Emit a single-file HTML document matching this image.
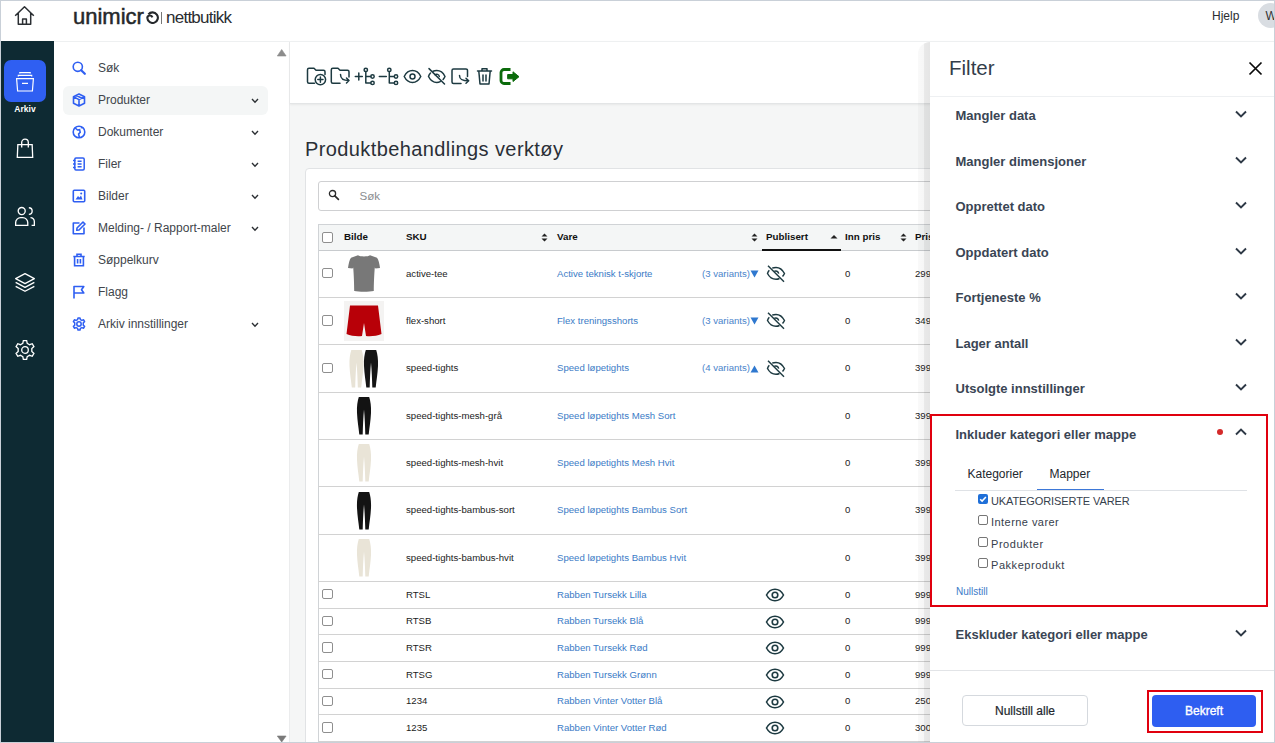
<!DOCTYPE html>
<html><head><meta charset="utf-8">
<style>
*{box-sizing:border-box;margin:0;padding:0}
html,body{width:1275px;height:743px;overflow:hidden;background:#fff;font-family:"Liberation Sans",sans-serif;color:#222}
svg{display:block}
.a{position:absolute}
#frame{position:absolute;left:0;top:0;width:1275px;height:743px;border:1px solid #c9d0d8;pointer-events:none;z-index:100}
#top{position:absolute;left:0;top:0;width:1275px;height:42px;background:#fff;border-bottom:1px solid #eef0f1}
#rail{position:absolute;left:0;top:41px;width:54px;height:702px;background:#0e2a33}
#nav{position:absolute;left:54px;top:41px;width:236px;height:702px;background:#fff}
#navscroll{position:absolute;left:289px;top:41px;width:1px;height:702px;background:#ebeced}
#main{position:absolute;left:290px;top:41px;width:985px;height:702px;background:#f5f6f6}
#toolbar{position:absolute;left:0;top:0;width:985px;height:63px;background:#fff;border-bottom:1px solid #e3e5e6;box-shadow:0 1px 2px rgba(0,0,0,0.06)}
.ni{position:absolute;left:63px;width:205px;height:29px;border-radius:6px;font-size:12px;color:#41454b}
.ni .t{position:absolute;left:35px;top:7px;line-height:14px}
.ni .ic{position:absolute;left:9px;top:7px}
.ni .ch{position:absolute;left:188px;top:12px}
#title{position:absolute;left:305px;top:138px;font-size:20px;letter-spacing:0.4px;color:#2a2f36}
#card{position:absolute;left:305px;top:168px;width:700px;height:600px;background:#fff;border:1px solid #e1e3e5;border-radius:4px}
#search{position:absolute;left:318px;top:181px;width:700px;height:30px;border:1px solid #cfd0d2;border-radius:3px;background:#fff}
#panel{position:absolute;left:930px;top:42px;width:345px;height:701px;background:#fff}
#pshadow{position:absolute;left:918px;top:42px;width:12px;height:701px;border-top-left-radius:12px;background:linear-gradient(to right,rgba(0,0,0,0.025) 0,rgba(0,0,0,0.035) 50%,rgba(0,0,0,0.085) 50%,rgba(0,0,0,0.10) 100%)}
.th{font-size:9.8px;font-weight:bold;color:#111;line-height:12px;white-space:nowrap}
.td{font-size:9.6px;color:#222;line-height:12px;white-space:nowrap}
.lk{color:#3b7bc6}
.lk2{color:#4a84cb}
.fh{font-size:13px;font-weight:bold;color:#3a4554;line-height:15px;white-space:nowrap}
</style></head><body>
<div id="top">
  <svg class="a" style="left:14px;top:5px" width="21" height="21" viewBox="0 0 21 21" fill="none" stroke="#2b2f33" stroke-width="1.5" stroke-linejoin="round"><path d="M1.2 10.8 L10.5 1.8 L19.8 10.8 M4.3 8.2 V19.3 H16.7 V8.2 M8.6 19.3 V14 H12.4 V19.3"/></svg>
  <div class="a" style="left:73px;top:4px;font-size:22px;line-height:25px;-webkit-text-stroke:0.5px #25282b;color:#25282b">unimicr</div><svg class="a" style="left:145.5px;top:11.3px" width="13" height="13" viewBox="0 0 13 13" fill="none" stroke="#25282b" stroke-width="2.1"><path d="M2.4 3.4 A5.3 5.3 0 1 1 1.3 7.2"/><path d="M1.3 7.2 A2.6 2.6 0 0 1 6.4 6.4"/></svg>
  <div class="a" style="left:161px;top:12px;width:1px;height:11.5px;background:#777"></div>
  <div class="a" style="left:166px;top:8px;font-size:17px;line-height:19px;letter-spacing:-0.75px;color:#2a2d31">nettbutikk</div>
  <div class="a" style="left:1212px;top:9px;font-size:12px;line-height:14px;color:#2a2d31">Hjelp</div>
  <div class="a" style="left:1258px;top:3px;width:25px;height:25px;border-radius:50%;background:#d9dde2"></div>
  <div class="a" style="left:1265.5px;top:9px;font-size:12px;line-height:14px;color:#333">W</div>
</div>
<div id="rail">
  <div class="a" style="left:4px;top:19px;width:42px;height:42px;border-radius:7px;background:#2f5ff2"></div>
  <svg class="a" style="left:15px;top:30px" width="20" height="22" viewBox="0 0 20 22" fill="none" stroke="#fff" stroke-width="1.2"><path d="M4.8 2.6 V1.6 H15.2 V2.6 M3.3 5.6 V4.4 H16.7 V5.6 M1.6 7.7 H18.4 L17.4 20 H2.6 Z M7 12.3 H13"/></svg>
  <div class="a" style="left:0;top:63px;width:50px;text-align:center;font-size:8.5px;font-weight:bold;color:#fff">Arkiv</div>
  <svg class="a" style="left:14px;top:96px" width="22" height="22" viewBox="0 0 20 20" fill="none" stroke="#fff" stroke-width="1.2"><path d="M3.5 7 H16.5 L17 18.5 H3 Z M7 9.5 V5 A3 3 0 0 1 13 5 V9.5"/></svg>
  <svg class="a" style="left:14px;top:164px" width="22" height="22" viewBox="0 0 20 20" fill="none" stroke="#fff" stroke-width="1.2"><circle cx="7" cy="5.5" r="3.2"/><path d="M1.5 18.5 V16 A4.5 4.5 0 0 1 6 11.5 H8 A4.5 4.5 0 0 1 12.5 16 V18.5 Z M13.5 2.5 A3 3 0 0 1 13.5 8.5 M15 11.5 A3.5 3.5 0 0 1 18.5 15 V18.5 H16"/></svg>
  <svg class="a" style="left:14px;top:230.5px" width="22" height="22" viewBox="0 0 20 20" fill="none" stroke="#fff" stroke-width="1.2" stroke-linejoin="round"><path d="M10 1.5 L18.5 6 L10 10.5 L1.5 6 Z M1.5 9.5 L10 14 L18.5 9.5 M1.5 13 L10 17.5 L18.5 13"/></svg>
  <svg class="a" style="left:14px;top:298px" width="22" height="22" viewBox="0 0 20 20" fill="none" stroke="#fff" stroke-width="1.2"><circle cx="10" cy="10" r="3"/><path d="M8.5 1.5 H11.5 L12 4 L14.2 5.2 L16.6 4.3 L18.1 6.9 L16.2 8.6 V11.4 L18.1 13.1 L16.6 15.7 L14.2 14.8 L12 16 L11.5 18.5 H8.5 L8 16 L5.8 14.8 L3.4 15.7 L1.9 13.1 L3.8 11.4 V8.6 L1.9 6.9 L3.4 4.3 L5.8 5.2 L8 4 Z"/></svg>
</div>
<div id="nav"></div>
<div id="navscroll"></div>
<svg class="a" style="left:277px;top:49px" width="10" height="8" viewBox="0 0 10 8"><path d="M0.3 7 L4.7 0.5 L9.1 7 Z" fill="#8c8c8c" stroke="#8c8c8c" stroke-width="0.6" stroke-linejoin="round"/></svg>
<svg class="a" style="left:277px;top:735px" width="10" height="8" viewBox="0 0 10 8"><path d="M0.3 1 L4.7 7 L9.1 1 Z" fill="#7a7a7a" stroke="#7a7a7a" stroke-width="0.6" stroke-linejoin="round"/></svg>
<div class="ni" style="top:54px"><svg class="ic" width="14" height="14" viewBox="0 0 14 14" fill="none" stroke="#2f5ff2" stroke-width="1.6"><circle cx="5.8" cy="5.8" r="4.6"/><path d="M9.2 9.2 L12.8 12.8" stroke-width="2.2" stroke-linecap="round"/></svg><span class="t">Søk</span></div>
<div class="ni" style="top:86px;background:#f4f6f6"><svg class="ic" width="14" height="14" viewBox="0 0 14 14" fill="none" stroke="#2f5ff2" stroke-width="1.6" stroke-linejoin="round"><path d="M7 1 L12.5 3.8 V10.2 L7 13 L1.5 10.2 V3.8 Z M1.5 3.8 L7 6.6 L12.5 3.8 M7 6.6 V13 M4.2 2.4 L9.8 5.2"/></svg><span class="t">Produkter</span><svg class="ch" width="8" height="6" viewBox="0 0 8 6" fill="none" stroke="#2b2f33" stroke-width="1.35"><path d="M1 1 L4 4.2 L7 1"/></svg></div>
<div class="ni" style="top:118px"><svg class="ic" width="14" height="14" viewBox="0 0 14 14" fill="none" stroke="#2f5ff2" stroke-width="1.6"><circle cx="7" cy="7" r="5.8"/><path d="M3.2 3 L5.5 5 L7.6 4.6 L8.2 7.2 L6.6 9 L7.4 12.6 M9.8 1.8 L9.5 3.4" /></svg><span class="t">Dokumenter</span><svg class="ch" width="8" height="6" viewBox="0 0 8 6" fill="none" stroke="#2b2f33" stroke-width="1.35"><path d="M1 1 L4 4.2 L7 1"/></svg></div>
<div class="ni" style="top:150px"><svg class="ic" width="14" height="14" viewBox="0 0 14 14" fill="none" stroke="#2f5ff2" stroke-width="1.5"><rect x="2.8" y="1" width="9.4" height="12" rx="1.2"/><path d="M1 3.5 H3.5 M1 7 H3.5 M1 10.5 H3.5 M5.6 4.3 H9.6 M5.6 7 H9.6 M5.6 9.7 H9.6"/></svg><span class="t">Filer</span><svg class="ch" width="8" height="6" viewBox="0 0 8 6" fill="none" stroke="#2b2f33" stroke-width="1.35"><path d="M1 1 L4 4.2 L7 1"/></svg></div>
<div class="ni" style="top:182px"><svg class="ic" width="14" height="14" viewBox="0 0 14 14"><rect x="1.3" y="1.3" width="11.4" height="11.4" rx="1" fill="none" stroke="#2f5ff2" stroke-width="1.6"/><path d="M3.5 10.5 L6 7 L7.5 8.5 L9 6.5 L10.5 10.5 Z" fill="#2f5ff2"/><circle cx="9.2" cy="4.4" r="1" fill="#2f5ff2"/></svg><span class="t">Bilder</span><svg class="ch" width="8" height="6" viewBox="0 0 8 6" fill="none" stroke="#2b2f33" stroke-width="1.35"><path d="M1 1 L4 4.2 L7 1"/></svg></div>
<div class="ni" style="top:214px"><svg class="ic" width="14" height="14" viewBox="0 0 14 14" fill="none" stroke="#2f5ff2" stroke-width="1.6" stroke-linejoin="round"><path d="M7.5 2 H1.3 V12.7 H12 V6.5"/><path d="M11 1 L13 3 L7 9 L4.8 9.3 L5 7 Z"/></svg><span class="t">Melding- / Rapport-maler</span><svg class="ch" width="8" height="6" viewBox="0 0 8 6" fill="none" stroke="#2b2f33" stroke-width="1.35"><path d="M1 1 L4 4.2 L7 1"/></svg></div>
<div class="ni" style="top:246px"><svg class="ic" width="14" height="14" viewBox="0 0 14 14" fill="none" stroke="#2f5ff2" stroke-width="1.6"><path d="M1.3 3.5 H12.7 M5 3.5 V1.3 H9 V3.5 M2.6 3.5 V12.7 H11.4 V3.5 M5.6 6 V10.5 M8.4 6 V10.5"/></svg><span class="t">Søppelkurv</span></div>
<div class="ni" style="top:278px"><svg class="ic" width="14" height="14" viewBox="0 0 14 14" fill="none" stroke="#2f5ff2" stroke-width="1.6" stroke-linejoin="round"><path d="M2 13.5 V1.5 H11.8 L9.5 4.8 L11.8 8 H2"/></svg><span class="t">Flagg</span></div>
<div class="ni" style="top:310px"><svg class="ic" width="14" height="14" viewBox="0 0 14 14" fill="none" stroke="#2f5ff2" stroke-width="1.5" stroke-linejoin="round"><circle cx="7" cy="7" r="2.2"/><path d="M6 0.9 H8 L8.4 2.6 L9.9 3.4 L11.6 2.8 L12.6 4.6 L11.3 5.8 V8.2 L12.6 9.4 L11.6 11.2 L9.9 10.6 L8.4 11.4 L8 13.1 H6 L5.6 11.4 L4.1 10.6 L2.4 11.2 L1.4 9.4 L2.7 8.2 V5.8 L1.4 4.6 L2.4 2.8 L4.1 3.4 L5.6 2.6 Z"/></svg><span class="t">Arkiv innstillinger</span><svg class="ch" width="8" height="6" viewBox="0 0 8 6" fill="none" stroke="#2b2f33" stroke-width="1.35"><path d="M1 1 L4 4.2 L7 1"/></svg></div>
<div id="main"><div id="toolbar"></div></div>
<div class="a" style="left:54px;top:41px;width:1221px;height:1px;background:#eef0f1"></div>
<svg class="a" style="left:300px;top:60px" width="230" height="32" viewBox="300 60 230 32" fill="none" stroke="#1d3a41" stroke-width="1.5" stroke-linecap="round" stroke-linejoin="round">
  <!-- folder plus -->
  <path d="M314.5 83.2 H309 A1.5 1.5 0 0 1 307.5 81.7 V69.8 A1.5 1.5 0 0 1 309 68.3 H314 L316 70.2 H323.5 A1.5 1.5 0 0 1 325 71.7 V74.5"/>
  <circle cx="320.4" cy="79.6" r="5.2"/><path d="M320.4 77 V82.2 M317.8 79.6 H323"/>
  <!-- folder arrow -->
  <path d="M340 83.2 H332.8 A1.5 1.5 0 0 1 331.3 81.7 V69.8 A1.5 1.5 0 0 1 332.8 68.3 H338 L340 70.2 H347.5 A1.5 1.5 0 0 1 349 71.7 V77"/>
  <path d="M340.5 74.5 C340.5 79 343 80.5 349 80.5 M346.5 78 L349 80.5 L346.5 83"/>
  <!-- plus tree -->
  <path d="M355.3 76.5 H362.3 M358.8 73 V80"/>
  <circle cx="365.8" cy="69.9" r="1.7"/><path d="M365.8 71.6 V82.9 H370.8 M365.8 76.5 H370.8"/><circle cx="372.5" cy="76.5" r="1.7"/><circle cx="372.5" cy="82.9" r="1.7"/>
  <!-- minus tree -->
  <path d="M379.3 76.5 H386.3"/>
  <circle cx="389.3" cy="69.9" r="1.7"/><path d="M389.3 71.6 V82.9 H394.3 M389.3 76.5 H394.3"/><circle cx="396" cy="76.5" r="1.7"/><circle cx="396" cy="82.9" r="1.7"/>
  <!-- eye -->
  <path d="M404.2 76.5 C406.5 72 409.5 70.6 412.5 70.6 C415.5 70.6 418.5 72 420.8 76.5 C418.5 81 415.5 82.4 412.5 82.4 C409.5 82.4 406.5 81 404.2 76.5 Z"/><circle cx="412.5" cy="76.5" r="2.5"/>
  <!-- eye slash -->
  <path d="M430.5 73 C429.5 74 428.9 75 428.5 76.5 C430.8 81 433.8 82.4 436.8 82.4 C438 82.4 439.2 82.1 440.3 81.6 M433 71.3 C434.2 70.8 435.5 70.6 436.8 70.6 C439.8 70.6 442.8 72 445 76.5 C444.4 77.7 443.8 78.6 443.1 79.4 M435 74.6 C436.5 73.6 439 74.3 439.3 76.5"/><path d="M429 68.6 L444.5 84"/>
  <!-- doc arrow -->
  <path d="M461 83.5 H453.5 A1.5 1.5 0 0 1 452 82 V70.4 A1.5 1.5 0 0 1 453.5 68.9 H466 A1.5 1.5 0 0 1 467.5 70.4 V76.5"/>
  <path d="M459.5 75.5 C459.5 79.5 462 80.8 468.5 80.8 M466 78.3 L468.7 80.8 L466 83.3"/>
  <!-- trash -->
  <path d="M477.5 71 H491.5 M482 71 V68.8 H487 V71 M478.8 71 L480 84 H489 L490.2 71 M483 75 V81 M486 75 V81"/>
  <!-- export -->
  <path d="M510.5 69.5 H504 A3 3 0 0 0 501 72.5 V80.5 A3 3 0 0 0 504 83.5 H510.5" stroke="#0b6b0b" stroke-width="2.8" stroke-linecap="butt"/>
  <path d="M508 74.5 H513 V71.8 L519 76.7 L513 81.5 V78.8 H508 Z" fill="#0b6b0b" stroke="#0b6b0b" stroke-width="1"/>
</svg>
<div id="title">Produktbehandlings verktøy</div>
<div id="card"></div>
<div id="search"></div>
<svg class="a" style="left:328px;top:189px" width="12" height="12" viewBox="0 0 12 12"><circle cx="4.5" cy="4.6" r="3.1" fill="none" stroke="#2a2a2a" stroke-width="1.3"/><path d="M6.8 6.9 L10.4 10.4" stroke="#2a2a2a" stroke-width="1.7" stroke-linecap="round"/></svg>
<div class="a" style="left:359.5px;top:188.7px;font-size:11.6px;color:#8a8d90">Søk</div>
<div class="a" style="left:318px;top:224px;width:700px;height:27px;background:#f4f6f6;border-top:1px solid #d0d3d6;border-bottom:1px solid #c8cbce"></div>
<div class="a" style="left:318px;top:224px;width:1px;height:518px;background:#d0d3d6"></div>
<div class="a" style="left:322px;top:232.0px;width:10.5px;height:10.5px;border:1px solid #8f8f8f;border-radius:2px;background:#fff"></div>
<div class="a th" style="left:344px;top:231px">Bilde</div>
<div class="a th" style="left:406px;top:231px">SKU</div>
<div class="a th" style="left:557px;top:231px">Vare</div>
<div class="a th" style="left:766px;top:231px">Publisert</div>
<div class="a th" style="left:845px;top:231px">Inn pris</div>
<div class="a th" style="left:915px;top:231px">Pris</div>
<svg class="a" style="left:541px;top:233px" width="7" height="9" viewBox="0 0 7 9"><path d="M0.5 3.6 L3.5 0.5 L6.5 3.6 Z M0.5 5.4 L3.5 8.5 L6.5 5.4 Z" fill="#222"/></svg>
<svg class="a" style="left:751px;top:233px" width="7" height="9" viewBox="0 0 7 9"><path d="M0.5 3.6 L3.5 0.5 L6.5 3.6 Z M0.5 5.4 L3.5 8.5 L6.5 5.4 Z" fill="#222"/></svg>
<svg class="a" style="left:900px;top:233px" width="7" height="9" viewBox="0 0 7 9"><path d="M0.5 3.6 L3.5 0.5 L6.5 3.6 Z M0.5 5.4 L3.5 8.5 L6.5 5.4 Z" fill="#222"/></svg>
<svg class="a" style="left:830px;top:234px" width="8" height="5" viewBox="0 0 8 5"><path d="M0.5 4.5 L4 1 L7.5 4.5 Z" fill="#222"/></svg>
<div class="a" style="left:762px;top:249px;width:79px;height:2px;background:#111"></div>
<div class="a" style="left:322px;top:267.9px;width:10.5px;height:10.5px;border:1px solid #8f8f8f;border-radius:2px;background:#fff"></div>
<svg class="a" style="left:344px;top:253.9px" width="40" height="40" viewBox="0 0 40 40"><path d="M14 1.2 C16 2.8 24 2.8 26 1.2 L33 3.8 C34.5 5.5 35.5 10 36 14 L31.5 14.5 L30.8 13.5 C30.2 20 29.8 30 29.8 37 C25 38 15 38 10.2 37 C10.2 30 9.8 20 9.2 13.5 L8.5 14.5 L4 14 C4.5 10 5.5 5.5 7 3.8 Z" fill="#787878"/></svg>
<div class="a td" style="left:406px;top:267.6px">active-tee</div>
<div class="a td lk" style="left:557px;top:267.6px">Active teknisk t-skjorte</div>
<div class="a td lk2" style="left:702px;top:267.6px">(3 variants)</div>
<svg class="a" style="left:750px;top:269.9px" width="9" height="8" viewBox="0 0 9 8"><path d="M0.5 0.5 H8.5 L4.5 7.5 Z" fill="#2f78cf"/></svg>
<svg class="a" style="left:765.5px;top:264.9px" width="20" height="18" viewBox="0 0 20 18" fill="none" stroke="#1d3a41" stroke-width="1.45"><path d="M3.3 5.2 C2.6 6 2 7 1.5 8.5 C3.8 12.9 6.8 14.3 10 14.3 C11.2 14.3 12.4 14 13.5 13.5 M6.2 3.2 C7.4 2.6 8.7 2.4 10 2.4 C13.2 2.4 16.2 4 18.5 8.5 C17.9 9.7 17.2 10.7 16.5 11.5 M8.2 6.4 C9.8 5.4 12.4 6.2 12.7 8.6"/><path d="M2 0.8 L18 16.8"/></svg>
<div class="a td" style="left:845px;top:267.6px">0</div>
<div class="a td" style="left:915px;top:267.6px">299</div>
<div class="a" style="left:318px;top:297.1px;width:700px;height:1px;background:#d2d2d2"></div>
<div class="a" style="left:322px;top:315.2px;width:10.5px;height:10.5px;border:1px solid #8f8f8f;border-radius:2px;background:#fff"></div>
<svg class="a" style="left:344px;top:301.2px" width="40" height="40" viewBox="0 0 40 40"><rect width="40" height="40" fill="#f4f3f2"/><path d="M6 4.5 H34 L37.5 33 C33 35 27 35.5 22 35 L20 22 L18 35 C13 35.5 7 35 2.5 33 Z" fill="#b80008"/></svg>
<div class="a td" style="left:406px;top:314.9px">flex-short</div>
<div class="a td lk" style="left:557px;top:314.9px">Flex treningsshorts</div>
<div class="a td lk2" style="left:702px;top:314.9px">(3 variants)</div>
<svg class="a" style="left:750px;top:317.2px" width="9" height="8" viewBox="0 0 9 8"><path d="M0.5 0.5 H8.5 L4.5 7.5 Z" fill="#2f78cf"/></svg>
<svg class="a" style="left:765.5px;top:312.2px" width="20" height="18" viewBox="0 0 20 18" fill="none" stroke="#1d3a41" stroke-width="1.45"><path d="M3.3 5.2 C2.6 6 2 7 1.5 8.5 C3.8 12.9 6.8 14.3 10 14.3 C11.2 14.3 12.4 14 13.5 13.5 M6.2 3.2 C7.4 2.6 8.7 2.4 10 2.4 C13.2 2.4 16.2 4 18.5 8.5 C17.9 9.7 17.2 10.7 16.5 11.5 M8.2 6.4 C9.8 5.4 12.4 6.2 12.7 8.6"/><path d="M2 0.8 L18 16.8"/></svg>
<div class="a td" style="left:845px;top:314.9px">0</div>
<div class="a td" style="left:915px;top:314.9px">349</div>
<div class="a" style="left:318px;top:344.4px;width:700px;height:1px;background:#d2d2d2"></div>
<div class="a" style="left:322px;top:362.6px;width:10.5px;height:10.5px;border:1px solid #8f8f8f;border-radius:2px;background:#fff"></div>
<svg class="a" style="left:344px;top:348.6px" width="40" height="40" viewBox="0 0 40 40"><path transform="translate(5,1)" d="M2.3 0 H12.7 C14 4 14.8 9 14.5 16 C14.1 24 13 30 12.2 37.5 H8.8 C8.6 30 8.2 20 7.5 12.5 C6.8 20 6.4 30 6.2 37.5 H2.8 C2 30 0.9 24 0.5 16 C0.2 9 1 4 2.3 0 Z" fill="#e8e3d6"/><path transform="translate(19.5,1)" d="M2.3 0 H12.7 C14 4 14.8 9 14.5 16 C14.1 24 13 30 12.2 37.5 H8.8 C8.6 30 8.2 20 7.5 12.5 C6.8 20 6.4 30 6.2 37.5 H2.8 C2 30 0.9 24 0.5 16 C0.2 9 1 4 2.3 0 Z" fill="#151515"/></svg>
<div class="a td" style="left:406px;top:362.2px">speed-tights</div>
<div class="a td lk" style="left:557px;top:362.2px">Speed løpetights</div>
<div class="a td lk2" style="left:702px;top:362.2px">(4 variants)</div>
<svg class="a" style="left:750px;top:364.6px" width="9" height="8" viewBox="0 0 9 8"><path d="M0.5 7.5 H8.5 L4.5 0.5 Z" fill="#2f78cf"/></svg>
<svg class="a" style="left:765.5px;top:359.6px" width="20" height="18" viewBox="0 0 20 18" fill="none" stroke="#1d3a41" stroke-width="1.45"><path d="M3.3 5.2 C2.6 6 2 7 1.5 8.5 C3.8 12.9 6.8 14.3 10 14.3 C11.2 14.3 12.4 14 13.5 13.5 M6.2 3.2 C7.4 2.6 8.7 2.4 10 2.4 C13.2 2.4 16.2 4 18.5 8.5 C17.9 9.7 17.2 10.7 16.5 11.5 M8.2 6.4 C9.8 5.4 12.4 6.2 12.7 8.6"/><path d="M2 0.8 L18 16.8"/></svg>
<div class="a td" style="left:845px;top:362.2px">0</div>
<div class="a td" style="left:915px;top:362.2px">399</div>
<div class="a" style="left:318px;top:391.7px;width:700px;height:1px;background:#d2d2d2"></div>
<svg class="a" style="left:344px;top:395.9px" width="40" height="40" viewBox="0 0 40 40"><path transform="translate(12.5,1)" d="M2.3 0 H12.7 C14 4 14.8 9 14.5 16 C14.1 24 13 30 12.2 37.5 H8.8 C8.6 30 8.2 20 7.5 12.5 C6.8 20 6.4 30 6.2 37.5 H2.8 C2 30 0.9 24 0.5 16 C0.2 9 1 4 2.3 0 Z" fill="#131313"/></svg>
<div class="a td" style="left:406px;top:409.6px">speed-tights-mesh-grå</div>
<div class="a td lk" style="left:557px;top:409.6px">Speed løpetights Mesh Sort</div>
<div class="a td" style="left:845px;top:409.6px">0</div>
<div class="a td" style="left:915px;top:409.6px">399</div>
<div class="a" style="left:318px;top:439.0px;width:700px;height:1px;background:#d2d2d2"></div>
<svg class="a" style="left:344px;top:443.2px" width="40" height="40" viewBox="0 0 40 40"><path transform="translate(12.5,1)" d="M2.3 0 H12.7 C14 4 14.8 9 14.5 16 C14.1 24 13 30 12.2 37.5 H8.8 C8.6 30 8.2 20 7.5 12.5 C6.8 20 6.4 30 6.2 37.5 H2.8 C2 30 0.9 24 0.5 16 C0.2 9 1 4 2.3 0 Z" fill="#e9e4d7"/></svg>
<div class="a td" style="left:406px;top:456.9px">speed-tights-mesh-hvit</div>
<div class="a td lk" style="left:557px;top:456.9px">Speed løpetights Mesh Hvit</div>
<div class="a td" style="left:845px;top:456.9px">0</div>
<div class="a td" style="left:915px;top:456.9px">399</div>
<div class="a" style="left:318px;top:486.3px;width:700px;height:1px;background:#d2d2d2"></div>
<svg class="a" style="left:344px;top:490.5px" width="40" height="40" viewBox="0 0 40 40"><path transform="translate(12.5,1)" d="M2.3 0 H12.7 C14 4 14.8 9 14.5 16 C14.1 24 13 30 12.2 37.5 H8.8 C8.6 30 8.2 20 7.5 12.5 C6.8 20 6.4 30 6.2 37.5 H2.8 C2 30 0.9 24 0.5 16 C0.2 9 1 4 2.3 0 Z" fill="#131313"/></svg>
<div class="a td" style="left:406px;top:504.2px">speed-tights-bambus-sort</div>
<div class="a td lk" style="left:557px;top:504.2px">Speed løpetights Bambus Sort</div>
<div class="a td" style="left:845px;top:504.2px">0</div>
<div class="a td" style="left:915px;top:504.2px">399</div>
<div class="a" style="left:318px;top:533.6px;width:700px;height:1px;background:#d2d2d2"></div>
<svg class="a" style="left:344px;top:537.8px" width="40" height="40" viewBox="0 0 40 40"><path transform="translate(12.5,1)" d="M2.3 0 H12.7 C14 4 14.8 9 14.5 16 C14.1 24 13 30 12.2 37.5 H8.8 C8.6 30 8.2 20 7.5 12.5 C6.8 20 6.4 30 6.2 37.5 H2.8 C2 30 0.9 24 0.5 16 C0.2 9 1 4 2.3 0 Z" fill="#e9e4d7"/></svg>
<div class="a td" style="left:406px;top:551.5px">speed-tights-bambus-hvit</div>
<div class="a td lk" style="left:557px;top:551.5px">Speed løpetights Bambus Hvit</div>
<div class="a td" style="left:845px;top:551.5px">0</div>
<div class="a td" style="left:915px;top:551.5px">399</div>
<div class="a" style="left:318px;top:580.9px;width:700px;height:1px;background:#d2d2d2"></div>
<div class="a" style="left:322px;top:588.8px;width:10.5px;height:10.5px;border:1px solid #8f8f8f;border-radius:2px;background:#fff"></div>
<div class="a td" style="left:406px;top:588.5px">RTSL</div>
<div class="a td lk" style="left:557px;top:588.5px">Rabben Tursekk Lilla</div>
<svg class="a" style="left:765px;top:586.8px" width="20" height="16" viewBox="0 0 20 16" fill="none" stroke="#1d3a41" stroke-width="1.6"><path d="M1.5 8 C3.8 3.6 6.8 2.2 10 2.2 C13.2 2.2 16.2 3.6 18.5 8 C16.2 12.4 13.2 13.8 10 13.8 C6.8 13.8 3.8 12.4 1.5 8 Z"/><circle cx="10" cy="8" r="2.8"/></svg>
<div class="a td" style="left:845px;top:588.5px">0</div>
<div class="a td" style="left:915px;top:588.5px">999</div>
<div class="a" style="left:318px;top:607.6px;width:700px;height:1px;background:#d2d2d2"></div>
<div class="a" style="left:322px;top:615.5px;width:10.5px;height:10.5px;border:1px solid #8f8f8f;border-radius:2px;background:#fff"></div>
<div class="a td" style="left:406px;top:615.2px">RTSB</div>
<div class="a td lk" style="left:557px;top:615.2px">Rabben Tursekk Blå</div>
<svg class="a" style="left:765px;top:613.5px" width="20" height="16" viewBox="0 0 20 16" fill="none" stroke="#1d3a41" stroke-width="1.6"><path d="M1.5 8 C3.8 3.6 6.8 2.2 10 2.2 C13.2 2.2 16.2 3.6 18.5 8 C16.2 12.4 13.2 13.8 10 13.8 C6.8 13.8 3.8 12.4 1.5 8 Z"/><circle cx="10" cy="8" r="2.8"/></svg>
<div class="a td" style="left:845px;top:615.2px">0</div>
<div class="a td" style="left:915px;top:615.2px">999</div>
<div class="a" style="left:318px;top:634.3px;width:700px;height:1px;background:#d2d2d2"></div>
<div class="a" style="left:322px;top:642.2px;width:10.5px;height:10.5px;border:1px solid #8f8f8f;border-radius:2px;background:#fff"></div>
<div class="a td" style="left:406px;top:641.9px">RTSR</div>
<div class="a td lk" style="left:557px;top:641.9px">Rabben Tursekk Rød</div>
<svg class="a" style="left:765px;top:640.2px" width="20" height="16" viewBox="0 0 20 16" fill="none" stroke="#1d3a41" stroke-width="1.6"><path d="M1.5 8 C3.8 3.6 6.8 2.2 10 2.2 C13.2 2.2 16.2 3.6 18.5 8 C16.2 12.4 13.2 13.8 10 13.8 C6.8 13.8 3.8 12.4 1.5 8 Z"/><circle cx="10" cy="8" r="2.8"/></svg>
<div class="a td" style="left:845px;top:641.9px">0</div>
<div class="a td" style="left:915px;top:641.9px">999</div>
<div class="a" style="left:318px;top:661.0px;width:700px;height:1px;background:#d2d2d2"></div>
<div class="a" style="left:322px;top:668.9px;width:10.5px;height:10.5px;border:1px solid #8f8f8f;border-radius:2px;background:#fff"></div>
<div class="a td" style="left:406px;top:668.6px">RTSG</div>
<div class="a td lk" style="left:557px;top:668.6px">Rabben Tursekk Grønn</div>
<svg class="a" style="left:765px;top:666.9px" width="20" height="16" viewBox="0 0 20 16" fill="none" stroke="#1d3a41" stroke-width="1.6"><path d="M1.5 8 C3.8 3.6 6.8 2.2 10 2.2 C13.2 2.2 16.2 3.6 18.5 8 C16.2 12.4 13.2 13.8 10 13.8 C6.8 13.8 3.8 12.4 1.5 8 Z"/><circle cx="10" cy="8" r="2.8"/></svg>
<div class="a td" style="left:845px;top:668.6px">0</div>
<div class="a td" style="left:915px;top:668.6px">999</div>
<div class="a" style="left:318px;top:687.7px;width:700px;height:1px;background:#d2d2d2"></div>
<div class="a" style="left:322px;top:695.6px;width:10.5px;height:10.5px;border:1px solid #8f8f8f;border-radius:2px;background:#fff"></div>
<div class="a td" style="left:406px;top:695.3px">1234</div>
<div class="a td lk" style="left:557px;top:695.3px">Rabben Vinter Votter Blå</div>
<svg class="a" style="left:765px;top:693.6px" width="20" height="16" viewBox="0 0 20 16" fill="none" stroke="#1d3a41" stroke-width="1.6"><path d="M1.5 8 C3.8 3.6 6.8 2.2 10 2.2 C13.2 2.2 16.2 3.6 18.5 8 C16.2 12.4 13.2 13.8 10 13.8 C6.8 13.8 3.8 12.4 1.5 8 Z"/><circle cx="10" cy="8" r="2.8"/></svg>
<div class="a td" style="left:845px;top:695.3px">0</div>
<div class="a td" style="left:915px;top:695.3px">250</div>
<div class="a" style="left:318px;top:714.4px;width:700px;height:1px;background:#d2d2d2"></div>
<div class="a" style="left:322px;top:722.3px;width:10.5px;height:10.5px;border:1px solid #8f8f8f;border-radius:2px;background:#fff"></div>
<div class="a td" style="left:406px;top:722.0px">1235</div>
<div class="a td lk" style="left:557px;top:722.0px">Rabben Vinter Votter Rød</div>
<svg class="a" style="left:765px;top:720.3px" width="20" height="16" viewBox="0 0 20 16" fill="none" stroke="#1d3a41" stroke-width="1.6"><path d="M1.5 8 C3.8 3.6 6.8 2.2 10 2.2 C13.2 2.2 16.2 3.6 18.5 8 C16.2 12.4 13.2 13.8 10 13.8 C6.8 13.8 3.8 12.4 1.5 8 Z"/><circle cx="10" cy="8" r="2.8"/></svg>
<div class="a td" style="left:845px;top:722.0px">0</div>
<div class="a td" style="left:915px;top:722.0px">300</div>
<div class="a" style="left:318px;top:741.1px;width:700px;height:1px;background:#d2d2d2"></div>
<div id="pshadow"></div><div id="panel"></div>
<div class="a" style="left:930px;top:96px;width:345px;height:1px;background:#eef0f2"></div>
<div class="a" style="left:949px;top:56px;font-size:20.5px;color:#333d4a">Filter</div>
<svg class="a" style="left:1248px;top:61px" width="15" height="15" viewBox="0 0 15 15" fill="none" stroke="#0a0a0a" stroke-width="1.7"><path d="M1.5 1.5 L13.5 13.5 M13.5 1.5 L1.5 13.5"/></svg>
<div class="a fh" style="left:955.5px;top:108.3px">Mangler data</div>
<svg class="a" style="left:1234px;top:110.1px" width="14" height="9" viewBox="0 0 14 9" fill="none" stroke="#2e3946" stroke-width="1.9" stroke-linejoin="miter"><path d="M2 1.5 L7 6.5 L12 1.5"/></svg>
<div class="a fh" style="left:955.5px;top:153.8px">Mangler dimensjoner</div>
<svg class="a" style="left:1234px;top:155.6px" width="14" height="9" viewBox="0 0 14 9" fill="none" stroke="#2e3946" stroke-width="1.9" stroke-linejoin="miter"><path d="M2 1.5 L7 6.5 L12 1.5"/></svg>
<div class="a fh" style="left:955.5px;top:199.3px">Opprettet dato</div>
<svg class="a" style="left:1234px;top:201.1px" width="14" height="9" viewBox="0 0 14 9" fill="none" stroke="#2e3946" stroke-width="1.9" stroke-linejoin="miter"><path d="M2 1.5 L7 6.5 L12 1.5"/></svg>
<div class="a fh" style="left:955.5px;top:244.8px">Oppdatert dato</div>
<svg class="a" style="left:1234px;top:246.6px" width="14" height="9" viewBox="0 0 14 9" fill="none" stroke="#2e3946" stroke-width="1.9" stroke-linejoin="miter"><path d="M2 1.5 L7 6.5 L12 1.5"/></svg>
<div class="a fh" style="left:955.5px;top:290.3px">Fortjeneste %</div>
<svg class="a" style="left:1234px;top:292.1px" width="14" height="9" viewBox="0 0 14 9" fill="none" stroke="#2e3946" stroke-width="1.9" stroke-linejoin="miter"><path d="M2 1.5 L7 6.5 L12 1.5"/></svg>
<div class="a fh" style="left:955.5px;top:335.8px">Lager antall</div>
<svg class="a" style="left:1234px;top:337.6px" width="14" height="9" viewBox="0 0 14 9" fill="none" stroke="#2e3946" stroke-width="1.9" stroke-linejoin="miter"><path d="M2 1.5 L7 6.5 L12 1.5"/></svg>
<div class="a fh" style="left:955.5px;top:381.3px">Utsolgte innstillinger</div>
<svg class="a" style="left:1234px;top:383.1px" width="14" height="9" viewBox="0 0 14 9" fill="none" stroke="#2e3946" stroke-width="1.9" stroke-linejoin="miter"><path d="M2 1.5 L7 6.5 L12 1.5"/></svg>
<div class="a fh" style="left:955.5px;top:426.8px">Inkluder kategori eller mappe</div>
<svg class="a" style="left:1234px;top:427.1px" width="14" height="9" viewBox="0 0 14 9" fill="none" stroke="#2e3946" stroke-width="1.9" stroke-linejoin="miter"><path d="M2 7.5 L7 2.5 L12 7.5"/></svg>
<div class="a fh" style="left:955.5px;top:626.8px">Ekskluder kategori eller mappe</div>
<svg class="a" style="left:1234px;top:628.6px" width="14" height="9" viewBox="0 0 14 9" fill="none" stroke="#2e3946" stroke-width="1.9" stroke-linejoin="miter"><path d="M2 1.5 L7 6.5 L12 1.5"/></svg>
<div class="a" style="left:1217px;top:429px;width:6px;height:6px;border-radius:50%;background:#d42a2a"></div>
<div class="a" style="left:967.5px;top:467px;font-size:12px;color:#22272d">Kategorier</div>
<div class="a" style="left:1049.5px;top:467px;font-size:12px;color:#22272d">Mapper</div>
<div class="a" style="left:955px;top:489.5px;width:292px;height:1px;background:#dfe2e6"></div>
<div class="a" style="left:1037px;top:488.5px;width:67px;height:1.5px;background:#3d78d8"></div>
<svg class="a" style="left:978px;top:494.4px" width="10" height="10" viewBox="0 0 10 10"><rect x="0" y="0" width="10" height="10" rx="2" fill="#1f6fd8"/><path d="M2.2 5.2 L4.1 7.1 L7.9 2.9" fill="none" stroke="#fff" stroke-width="1.5"/></svg>
<div class="a" style="left:991px;top:495.2px;font-size:11px;letter-spacing:-0.1px;color:#36404c">UKATEGORISERTE VARER</div>
<div class="a" style="left:978px;top:515.1px;width:10px;height:10px;border:1px solid #767676;border-radius:2px;background:#fff"></div>
<div class="a" style="left:991px;top:515.9px;font-size:11px;letter-spacing:0.45px;color:#36404c">Interne varer</div>
<div class="a" style="left:978px;top:536.9px;width:10px;height:10px;border:1px solid #767676;border-radius:2px;background:#fff"></div>
<div class="a" style="left:991px;top:537.7px;font-size:11px;letter-spacing:0.55px;color:#36404c">Produkter</div>
<div class="a" style="left:978px;top:558.1px;width:10px;height:10px;border:1px solid #767676;border-radius:2px;background:#fff"></div>
<div class="a" style="left:991px;top:558.9px;font-size:11px;letter-spacing:0.55px;color:#36404c">Pakkeprodukt</div>
<div class="a" style="left:956px;top:586px;font-size:10px;color:#3d7cc9">Nullstill</div>
<div class="a" style="left:930px;top:414px;width:338px;height:193px;border:2px solid #e0000e"></div>
<div class="a" style="left:930px;top:670px;width:345px;height:1px;background:#e2e4e7"></div>
<div class="a" style="left:962px;top:695px;width:126px;height:31px;border:1px solid #d5d9de;border-radius:4px;background:#fff"></div>
<div class="a" style="left:995px;top:704px;font-size:12px;-webkit-text-stroke:0.2px #22272d;color:#22272d">Nullstill alle</div>
<div class="a" style="left:1152px;top:695px;width:104px;height:32px;border-radius:4px;background:#2e5ef1"></div>
<div class="a" style="left:1152px;top:704px;width:104px;text-align:center;font-size:12px;-webkit-text-stroke:0.35px #fff;color:#fff">Bekreft</div>
<div class="a" style="left:1147px;top:690px;width:116px;height:43px;border:2px solid #e0000e"></div>
<div id="frame"></div></body></html>
